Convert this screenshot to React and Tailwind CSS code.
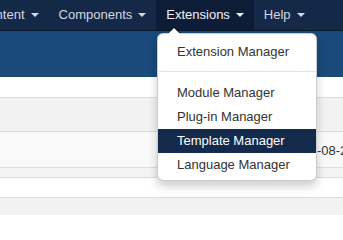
import React from "react";

function Caret() {
  return (
    <span className="ml-[6px] inline-block w-0 h-0 border-t-[4px] border-t-current border-x-[4px] border-x-transparent" />
  );
}

function NavItem({ label, active }) {
  return (
    <div
      className={
        "flex items-center h-full pl-[10px] pr-[10px] shrink-0 " +
        (active ? "bg-[#0e1d37] text-[#f2f4f8]" : "text-[#d3d9e3]")
      }
    >
      <span>{label}</span>
      <Caret />
    </div>
  );
}

const items = [
  { label: "Extension Manager" },
  { divider: true },
  { label: "Module Manager" },
  { label: "Plug-in Manager" },
  { label: "Template Manager", active: true },
  { label: "Language Manager" },
];

export default function App() {
  return (
    <div className="relative w-[343px] h-[215px] overflow-hidden bg-white text-[13px] font-['Liberation_Sans',Arial,sans-serif]">
      <div className="h-[31px] bg-[#142848] border-b border-[#0a162b] flex ml-[-31px] whitespace-nowrap">
        <NavItem label="Content" />
        <NavItem label="Components" />
        <NavItem label="Extensions" active />
        <NavItem label="Help" />
      </div>
      <div className="h-[46px] bg-[#1a4a7a]" />
      <div className="h-[20px] bg-white" />
      <div className="border-t border-[#dcdcdc] h-[34px] bg-[#f2f2f2]" />
      <div className="border-t border-[#dcdcdc] h-[36px] bg-[#f9f9f9] relative">
        <span className="absolute left-[288px] top-[9px] text-[#333] whitespace-nowrap">2013-08-26</span>
      </div>
      <div className="border-t border-[#dcdcdc] h-[10px] bg-[#f3f3f3]" />
      <div className="border-t border-[#dcdcdc] h-[20px] bg-white" />
      <div className="border-t border-[#dcdcdc] h-[40px] bg-[#f2f2f2]" />

      <div className="absolute left-[157px] top-[33px] w-[160px] bg-white border border-[rgba(0,0,0,0.2)] rounded-[6px] shadow-[0_5px_10px_rgba(0,0,0,0.2)] pt-[6px] pb-[3px]">
        <span className="absolute left-[9px] top-[-8px] w-0 h-0 border-b-[7px] border-b-[rgba(0,0,0,0.2)] border-x-[7px] border-x-transparent" />
        <span className="absolute left-[10px] top-[-6px] w-0 h-0 border-b-[6px] border-b-white border-x-[6px] border-x-transparent" />
        {items.map((it, i) =>
          it.divider ? (
            <div key={i} className="h-px bg-[#e5e5e5] mt-[7px] mb-[9px]" />
          ) : (
            <div
              key={i}
              className={
                "h-[24px] leading-[24px] pl-[19px] whitespace-nowrap " +
                (it.active ? "bg-[#132a4d] text-white" : "text-[#333]")
              }
            >
              {it.label}
            </div>
          )
        )}
      </div>
    </div>
  );
}
